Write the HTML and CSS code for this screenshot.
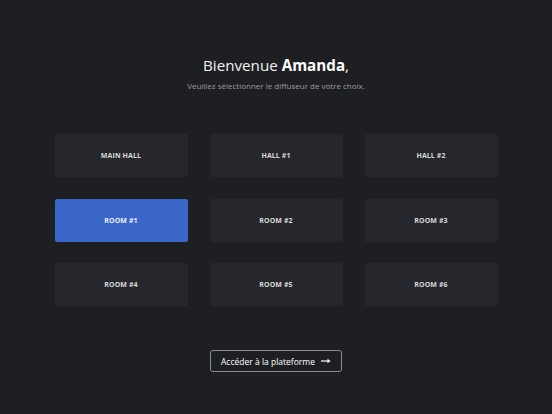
FILE: index.html
```html
<!DOCTYPE html>
<html lang="fr">
<head>
<meta charset="utf-8">
<title>Sélection du diffuseur</title>
<link rel="stylesheet" href="styles.css">
</head>
<body>
<main class="page">
  <header class="intro">
    <h1 class="title">Bienvenue <strong>Amanda</strong>,</h1>
    <p class="subtitle">Veuillez sélectionner le diffuseur de votre choix.</p>
  </header>
  <div class="grid">
    <button class="room">MAIN HALL</button>
    <button class="room">HALL #1</button>
    <button class="room">HALL #2</button>
    <button class="room room--active">ROOM #1</button>
    <button class="room">ROOM #2</button>
    <button class="room">ROOM #3</button>
    <button class="room">ROOM #4</button>
    <button class="room">ROOM #5</button>
    <button class="room">ROOM #6</button>
  </div>
  <button class="cta">
    <span>Accéder à la plateforme</span>
    <svg class="arrow" width="10" height="6" viewBox="0 0 10 6" aria-hidden="true">
      <path d="M0 3H8.5" stroke="#fff" stroke-width="1.2"/>
      <path d="M6.5 0.8L9.5 3L6.5 5.2Z" fill="#fff"/>
    </svg>
  </button>
</main>
</body>
</html>
```
FILE: styles.css
```css
* { box-sizing: border-box; }
html, body {
  margin: 0;
  height: 100%;
  background: #1e1f23;
}
body {
  font-family: "Open Sans", "Noto Sans", sans-serif;
  color: #fff;
}
.page {
  display: flex;
  flex-direction: column;
  align-items: center;
  padding-top: 55px;
}
.intro {
  text-align: center;
}
.title {
  margin: 0;
  font-size: 15.2px;
  font-weight: 400;
  line-height: 20px;
  color: #f2f2f2;
}
.title strong {
  font-weight: 700;
  color: #fff;
}
.subtitle {
  margin: 5px 0 0;
  font-size: 8px;
  line-height: 12px;
  color: #9a9ba0;
}
.grid {
  margin-top: 42px;
  display: grid;
  grid-template-columns: repeat(3, 133px);
  grid-auto-rows: 43px;
  column-gap: 22px;
  row-gap: 21.5px;
}
.room {
  border: 0;
  border-radius: 2px;
  background: #26272c;
  color: #d8d8da;
  font-family: inherit;
  font-size: 7px;
  font-weight: 700;
  letter-spacing: 0.1px;
  padding: 0;
}
.room--active {
  background: #3a66c8;
  color: #e6ecf8;
}
.cta {
  margin-top: 44px;
  width: 132px;
  height: 22px;
  border: 1px solid #8a8b90;
  border-radius: 3px;
  background: transparent;
  color: #fff;
  font-family: inherit;
  font-size: 8.5px;
  font-weight: 500;
  display: flex;
  align-items: center;
  justify-content: space-between;
  padding: 0 10px 0 10px;
}
.arrow { display: block; }
```
